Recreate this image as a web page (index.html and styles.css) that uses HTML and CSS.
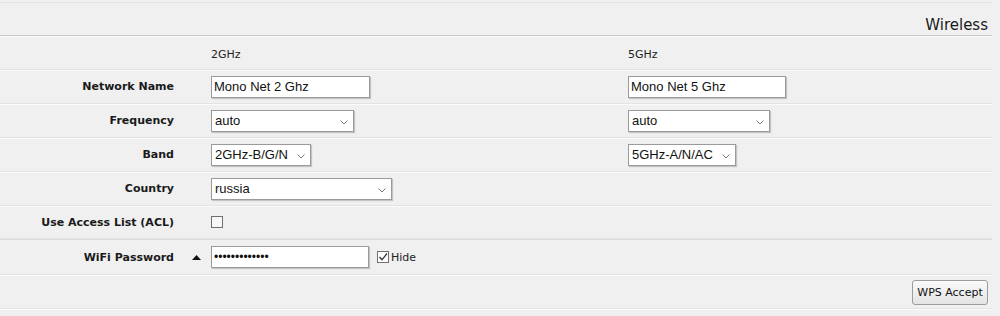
FILE: index.html
```html
<!DOCTYPE html>
<html>
<head>
<meta charset="utf-8">
<link rel="stylesheet" href="styles.css">
</head>
<body>
<div class="page">
  <div class="title-row"><span class="title">Wireless</span></div>
  <div class="row">
    <div class="label"></div><div class="mark"></div>
    <div class="cell band-head">2GHz</div>
    <div class="cell band-head">5GHz</div>
  </div>
  <div class="row">
    <div class="label">Network Name</div><div class="mark"></div>
    <div class="cell"><input class="text w159" type="text" value="Mono Net 2 Ghz"></div>
    <div class="cell"><input class="text w158" type="text" value="Mono Net 5 Ghz"></div>
  </div>
  <div class="row">
    <div class="label">Frequency</div><div class="mark"></div>
    <div class="cell"><span class="sel w143">auto<svg class="chev" viewBox="0 0 8 5" width="8" height="5"><path d="M0.5 0.5 L4 4 L7.5 0.5" fill="none" stroke="#777" stroke-width="1"/></svg></span></div>
    <div class="cell"><span class="sel w142">auto<svg class="chev" viewBox="0 0 8 5" width="8" height="5"><path d="M0.5 0.5 L4 4 L7.5 0.5" fill="none" stroke="#777" stroke-width="1"/></svg></span></div>
  </div>
  <div class="row">
    <div class="label">Band</div><div class="mark"></div>
    <div class="cell"><span class="sel w100">2GHz-B/G/N<svg class="chev" viewBox="0 0 8 5" width="8" height="5"><path d="M0.5 0.5 L4 4 L7.5 0.5" fill="none" stroke="#777" stroke-width="1"/></svg></span></div>
    <div class="cell"><span class="sel w108">5GHz-A/N/AC<svg class="chev" viewBox="0 0 8 5" width="8" height="5"><path d="M0.5 0.5 L4 4 L7.5 0.5" fill="none" stroke="#777" stroke-width="1"/></svg></span></div>
  </div>
  <div class="row">
    <div class="label">Country</div><div class="mark"></div>
    <div class="cell"><span class="sel w181">russia<svg class="chev" viewBox="0 0 8 5" width="8" height="5"><path d="M0.5 0.5 L4 4 L7.5 0.5" fill="none" stroke="#777" stroke-width="1"/></svg></span></div>
    <div class="cell"></div>
  </div>
  <div class="row row-acl">
    <div class="label">Use Access List (ACL)</div><div class="mark"></div>
    <div class="cell"><span class="check"></span></div>
    <div class="cell"></div>
  </div>
  <div class="row row-sep">
    <div class="label">WiFi Password</div>
    <div class="mark"><svg viewBox="0 0 9 5" width="9" height="5"><path d="M0 5 L4.5 0 L9 5 Z" fill="#111"/></svg></div>
    <div class="cell"><input class="text w158 pw" type="text" value="•••••••••••••"><span class="check checked"><svg viewBox="0 0 10 10" width="10" height="10"><path d="M1.5 5 L4 7.8 L9 1.5" fill="none" stroke="#333" stroke-width="1.3"/></svg></span><span class="hide">Hide</span></div>
    <div class="cell"></div>
  </div>
  <div class="button-row"><button class="btn">WPS Accept</button></div>
</div>
</body>
</html>
```
FILE: styles.css
```css
html, body {
  margin: 0;
  padding: 0;
  background: #f0f0f0;
}
body {
  width: 1000px;
  height: 316px;
  overflow: hidden;
  font-family: "DejaVu Sans", Verdana, sans-serif;
  font-size: 11px;
  color: #111;
}
.page {
  width: 992px;
  padding-top: 2px;
}
.title-row {
  border-top: 1px solid #e4e4e4;
  height: 32px;
  border-bottom: 1px solid #c8c8c8;
  box-shadow: 0 1px 0 #fafafa;
  display: flex;
  justify-content: flex-end;
  align-items: flex-start;
}
.title {
  font-size: 15px;
  color: #1a1a1a;
  margin-right: 4px;
  margin-top: 13px;
}
.row {
  display: grid;
  grid-template-columns: 174px 37px 417px 1fr;
  height: 33px;
  align-items: center;
  border-bottom: 1px solid #e3e3e3;
  box-shadow: 0 1px 0 #fbfbfb;
}
.row-acl {
  height: 32px;
}
.row-sep {
  height: 34px;
  border-top: 1px solid #dcdcdc;
}
.label {
  text-align: right;
  font-weight: bold;
  color: #1a1a1a;
}
.mark {
  display: flex;
  justify-content: flex-end;
  padding-right: 10px;
}
.cell {
  display: flex;
  align-items: center;
}
.band-head {
  padding-top: 4px;
  color: #222;
}
.text {
  box-sizing: border-box;
  height: 22px;
  margin: 0;
  padding: 0 2px;
  border: 1px solid #9a9a9a;
  box-shadow: 1px 1px 1px rgba(0,0,0,0.18);
  background: #fff;
  font-family: "Liberation Sans", Arial, sans-serif;
  font-size: 13px;
  color: #111;
  outline: none;
}
.pw {
  font-size: 12px;
}
.sel {
  position: relative;
  box-sizing: border-box;
  display: inline-flex;
  align-items: center;
  height: 22px;
  padding: 0 3px;
  border: 1px solid #9a9a9a;
  box-shadow: 1px 1px 1px rgba(0,0,0,0.18);
  background: #fff;
  font-family: "Liberation Sans", Arial, sans-serif;
  font-size: 13px;
  color: #111;
}
.chev {
  position: absolute;
  right: 5px;
  top: 9px;
}
.w100 { width: 100px; }
.w108 { width: 108px; }
.w142 { width: 142px; }
.w143 { width: 143px; }
.w158 { width: 158px; }
.w159 { width: 159px; }
.w181 { width: 181px; }
.check {
  box-sizing: border-box;
  display: inline-flex;
  align-items: center;
  justify-content: center;
  width: 12px;
  height: 12px;
  border: 1px solid #6f6f6f;
  background: #f8f8f8;
}
.checked {
  margin-left: 8px;
  background: #fff;
}
.hide {
  margin-left: 2px;
  color: #222;
}
.button-row {
  height: 33px;
  display: flex;
  justify-content: flex-end;
  align-items: center;
  border-bottom: 1px solid #e3e3e3;
  box-shadow: 0 1px 0 #fbfbfb;
}
.btn {
  box-sizing: border-box;
  width: 76px;
  height: 25px;
  margin-right: 4px;
  margin-top: 2px;
  padding: 0;
  border: 1px solid #9c9c9c;
  border-radius: 3px;
  background: linear-gradient(#fafafa, #e4e4e4);
  font-family: "DejaVu Sans", Verdana, sans-serif;
  font-size: 11px;
  color: #111;
}
```
